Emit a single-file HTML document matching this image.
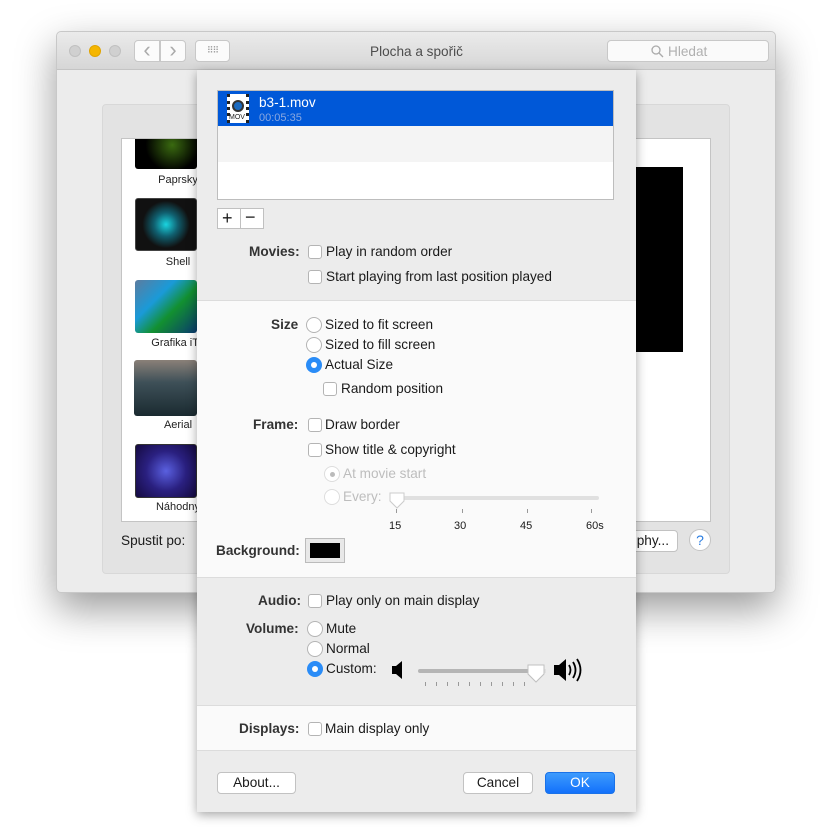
<!DOCTYPE html>
<html><head><meta charset="utf-8"><style>
*{margin:0;padding:0;box-sizing:border-box}
body{width:832px;height:833px;background:#fff;position:relative;overflow:hidden;font-family:"Liberation Sans",sans-serif;font-size:13.6px;color:#1a1a1a}
.a{position:absolute}
.t{position:absolute;white-space:nowrap;line-height:16px}
.b{font-weight:bold;color:#333}
.cb{position:absolute;width:14px;height:14px;border:1px solid #b4b4b4;border-radius:3px;background:#fff}
.rd{position:absolute;width:16px;height:16px;border:1px solid #b4b4b4;border-radius:50%;background:#fff}
.rs{position:absolute;width:16px;height:16px;border-radius:50%;background:#2a8cf7}
.rs:after{content:"";position:absolute;left:5px;top:5px;width:6px;height:6px;border-radius:50%;background:#fff}
.dis{color:#bdbdbd}
.btn{position:absolute;height:22px;background:#fff;border:1px solid #c2c2c2;border-radius:4px;text-align:center;line-height:20px}
.lab{position:absolute;width:80px;text-align:center;font-size:11px;color:#222}
</style></head><body>
<!-- window -->
<div class="a" style="left:56px;top:31px;width:720px;height:562px;background:#ececec;border:1px solid #c8c8c8;border-radius:5px;box-shadow:0 16px 40px rgba(0,0,0,.4)"></div>
<div class="a" style="left:57px;top:32px;width:718px;height:38px;background:linear-gradient(#ebebeb,#d6d6d6);border-bottom:1px solid #c4c4c4;border-radius:5px 5px 0 0"></div>
<div class="a" style="left:69px;top:45px;width:12px;height:12px;border-radius:50%;background:#d0d0d0;border:1px solid #c0c0c0"></div>
<div class="a" style="left:89px;top:45px;width:12px;height:12px;border-radius:50%;background:#f5b600;border:1px solid #e0a400"></div>
<div class="a" style="left:109px;top:45px;width:12px;height:12px;border-radius:50%;background:#d0d0d0;border:1px solid #c0c0c0"></div>
<div class="a" style="left:134px;top:40px;width:26px;height:22px;background:#fbfbfb;border:1px solid #c8c8c8;border-radius:4px 0 0 4px;color:#aaa;text-align:center;line-height:18px;font-size:22px">‹</div>
<div class="a" style="left:160px;top:40px;width:26px;height:22px;background:#fbfbfb;border:1px solid #c8c8c8;border-radius:0 4px 4px 0;color:#aaa;text-align:center;line-height:18px;font-size:22px">›</div>
<div class="a" style="left:195px;top:40px;width:35px;height:22px;background:#fbfbfb;border:1px solid #c8c8c8;border-radius:4px;color:#999;text-align:center;line-height:18px;font-size:9px;letter-spacing:-1px">⠿⠿</div>
<div class="t" style="left:370px;top:44px;color:#4d4d4d">Plocha a spořič</div>
<div class="a" style="left:607px;top:40px;width:162px;height:22px;background:#fafafa;border:1px solid #c8c8c8;border-radius:4px"></div>
<svg class="a" style="left:651px;top:45px" width="13" height="13"><circle cx="5" cy="5" r="4" fill="none" stroke="#aaa" stroke-width="1.3"/><path d="M8 8l4 4" stroke="#aaa" stroke-width="1.3"/></svg>
<div class="t" style="left:668px;top:44px;color:#b0b0b0">Hledat</div>
<div class="a" style="left:102px;top:104px;width:628px;height:470px;background:#e3e3e3;border:1px solid #d8d8d8;border-radius:4px"></div>
<div class="a" style="left:121px;top:138px;width:590px;height:384px;background:#fff;border:1px solid #c4c4c4"></div>
<div class="a" style="left:630px;top:167px;width:53px;height:185px;background:#000"></div>
<div class="a" style="left:135px;top:139px;width:62px;height:30px;background:radial-gradient(circle at 60% 20%,#3a6a10,#000 60%);border-radius:0 0 3px 3px"></div>
<div class="lab" style="left:138px;top:174px">Paprsky</div>
<div class="a" style="left:135px;top:198px;width:62px;height:53px;background:radial-gradient(circle,#1ad4e0 0,#106070 30%,#111 60%);border:1px solid #444;border-radius:3px"></div>
<div class="lab" style="left:138px;top:256px">Shell</div>
<div class="a" style="left:135px;top:280px;width:62px;height:53px;background:linear-gradient(135deg,#5b7ca0,#1a9ad8 35%,#129030 60%,#0a3a70);border-radius:3px"></div>
<div class="lab" style="left:138px;top:337px">Grafika iTu</div>
<div class="a" style="left:134px;top:360px;width:63px;height:56px;background:linear-gradient(#8a8078,#3e5058 40%,#1a2a30);border-radius:3px"></div>
<div class="lab" style="left:138px;top:419px">Aerial</div>
<div class="a" style="left:135px;top:444px;width:62px;height:54px;background:radial-gradient(circle,#5a60e0,#2a2080 50%,#150a40);border:1px solid #333;border-radius:3px"></div>
<div class="lab" style="left:138px;top:501px">Náhodny</div>
<div class="t" style="left:121px;top:533px">Spustit po:</div>
<div class="btn" style="left:620px;top:530px;width:58px;text-align:right;padding-right:8px">phy...</div>
<div class="a" style="left:689px;top:529px;width:22px;height:22px;border-radius:50%;background:#fff;border:1px solid #c4c4c4;color:#2a7de1;text-align:center;line-height:20px;font-size:14px">?</div>

<!-- sheet -->
<div class="a" style="left:197px;top:70px;width:439px;height:742px;background:#ececec;box-shadow:0 3px 10px rgba(0,0,0,.35)"></div>
<div class="a" style="left:197px;top:300px;width:439px;height:278px;background:#fafafa;border-top:1px solid #dcdcdc;border-bottom:1px solid #dcdcdc"></div>
<div class="a" style="left:197px;top:705px;width:439px;height:46px;background:#fafafa;border-top:1px solid #dcdcdc;border-bottom:1px solid #dcdcdc"></div>

<div class="a" style="left:217px;top:90px;width:397px;height:110px;background:#fff;border:1px solid #bdbdbd"></div>
<div class="a" style="left:218px;top:91px;width:395px;height:35px;background:#0058d8"></div>
<div class="a" style="left:218px;top:126px;width:395px;height:36px;background:#f4f4f4"></div>
<div class="a" style="left:227px;top:94px;width:22px;height:29px;background:#fff;border-left:3px dotted #222;border-right:3px dotted #222"></div>
<div class="a" style="left:232px;top:100px;width:12px;height:12px;border-radius:50%;background:#1a6ac0;border:2px solid #333"></div>
<div class="t" style="left:229px;top:113px;font-size:7px;line-height:9px;color:#222">MOV</div>
<div class="t" style="left:259px;top:95px;color:#fff">b3-1.mov</div>
<div class="t" style="left:259px;top:110px;color:#8aa8e0;font-size:11px">00:05:35</div>
<div class="a" style="left:217px;top:208px;width:47px;height:21px;background:#fff;border:1px solid #c0c0c0"></div>
<div class="a" style="left:240px;top:208px;width:1px;height:21px;background:#c0c0c0"></div>
<div class="t" style="left:222px;top:209px;font-size:18px;line-height:18px">+</div>
<div class="t" style="left:245px;top:208px;font-size:18px;line-height:18px">−</div>

<div class="t b" style="left:249px;top:244px">Movies:</div>
<div class="cb" style="left:308px;top:245px"></div><div class="t" style="left:326px;top:244px">Play in random order</div>
<div class="cb" style="left:308px;top:270px"></div><div class="t" style="left:326px;top:269px">Start playing from last position played</div>

<div class="t b" style="left:271px;top:317px">Size</div>
<div class="rd" style="left:306px;top:317px"></div><div class="t" style="left:325px;top:317px">Sized to fit screen</div>
<div class="rd" style="left:306px;top:337px"></div><div class="t" style="left:325px;top:337px">Sized to fill screen</div>
<div class="rs" style="left:306px;top:357px"></div><div class="t" style="left:325px;top:357px">Actual Size</div>
<div class="cb" style="left:323px;top:382px"></div><div class="t" style="left:341px;top:381px">Random position</div>
<div class="t b" style="left:253px;top:417px">Frame:</div>
<div class="cb" style="left:308px;top:418px"></div><div class="t" style="left:325px;top:417px">Draw border</div>
<div class="cb" style="left:308px;top:443px"></div><div class="t" style="left:325px;top:442px">Show title &amp; copyright</div>
<div class="rd" style="left:324px;top:466px;border-color:#ddd"></div><div class="a" style="left:330px;top:472px;width:5px;height:5px;border-radius:50%;background:#bbb"></div>
<div class="t dis" style="left:343px;top:466px">At movie start</div>
<div class="rd" style="left:324px;top:489px;border-color:#ddd"></div><div class="t dis" style="left:343px;top:489px">Every:</div>
<div class="a" style="left:397px;top:496px;width:202px;height:4px;background:#e0e0e0;border-radius:2px"></div>
<svg class="a" style="left:388px;top:491px" width="18" height="20"><path d="M2 2h14v8l-7 7-7-7z" fill="#fff" stroke="#ccc"/></svg>
<div class="a" style="left:396px;top:509px;width:1px;height:4px;background:#999"></div>
<div class="a" style="left:462px;top:509px;width:1px;height:4px;background:#999"></div>
<div class="a" style="left:527px;top:509px;width:1px;height:4px;background:#999"></div>
<div class="a" style="left:591px;top:509px;width:1px;height:4px;background:#999"></div>
<div class="t" style="left:389px;top:518px;font-size:11px">15</div>
<div class="t" style="left:454px;top:518px;font-size:11px">30</div>
<div class="t" style="left:520px;top:518px;font-size:11px">45</div>
<div class="t" style="left:586px;top:518px;font-size:11px">60s</div>
<div class="t b" style="left:216px;top:543px">Background:</div>
<div class="a" style="left:305px;top:538px;width:40px;height:25px;background:#e8e8e8;border:1px solid #bbb"></div>
<div class="a" style="left:310px;top:543px;width:30px;height:15px;background:#000"></div>

<div class="t b" style="left:258px;top:593px">Audio:</div>
<div class="cb" style="left:308px;top:594px"></div><div class="t" style="left:326px;top:593px">Play only on main display</div>
<div class="t b" style="left:246px;top:621px">Volume:</div>
<div class="rd" style="left:307px;top:621px"></div><div class="t" style="left:326px;top:621px">Mute</div>
<div class="rd" style="left:307px;top:641px"></div><div class="t" style="left:326px;top:641px">Normal</div>
<div class="rs" style="left:307px;top:661px"></div><div class="t" style="left:326px;top:661px">Custom:</div>
<svg class="a" style="left:391px;top:660px" width="14" height="20"><path d="M1 6h4l6-5v18l-6-5H1z" fill="#000"/></svg>
<div class="a" style="left:418px;top:669px;width:120px;height:4px;background:#b5b5b5;border-radius:2px"></div>
<div class="a" style="left:538px;top:669px;width:8px;height:4px;background:#e0e0e0"></div>
<svg class="a" style="left:526px;top:663px" width="20" height="22"><path d="M2 2h16v9l-8 8-8-8z" fill="#fff" stroke="#c0c0c0"/></svg>
<div class="a" style="left:425px;top:682px;width:105px;height:4px;background:repeating-linear-gradient(90deg,#999 0 1px,transparent 1px 11px)"></div>
<svg class="a" style="left:553px;top:656px" width="34" height="28"><path d="M1 9h5l7-6v22l-7-6H1z" fill="#000"/><path d="M16 9q3 5 0 10M20 6q5 8 0 16M24 3q7 11 0 22" fill="none" stroke="#000" stroke-width="1.8"/></svg>

<div class="t b" style="left:239px;top:721px">Displays:</div>
<div class="cb" style="left:308px;top:722px"></div><div class="t" style="left:325px;top:721px">Main display only</div>

<div class="btn" style="left:217px;top:772px;width:79px">About...</div>
<div class="btn" style="left:463px;top:772px;width:70px">Cancel</div>
<div class="btn" style="left:545px;top:772px;width:70px;background:linear-gradient(#3d9bfd,#1371fb);border-color:#1a72e8;color:#fff">OK</div>
</body></html>
